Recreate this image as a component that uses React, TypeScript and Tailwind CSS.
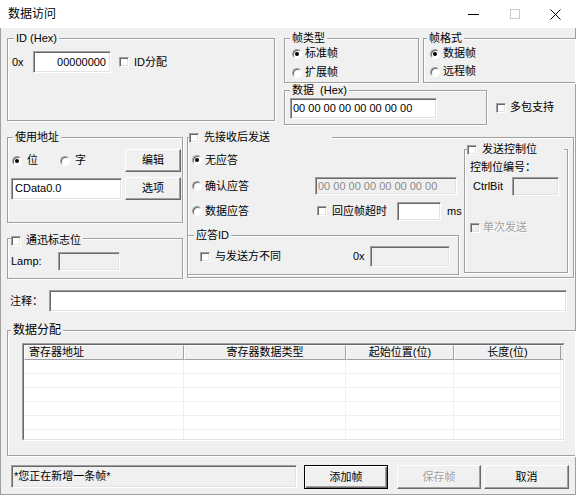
import type { ReactNode } from 'react';

const SUNKEN =
  'border border-t-[#a0a0a0] border-l-[#a0a0a0] border-b-white border-r-white shadow-[inset_1px_1px_0_#696969,inset_-1px_-1px_0_#e3e3e3]';

function Group({
  caption,
  captionClass = '',
  className = '',
  children,
}: {
  caption: ReactNode;
  captionClass?: string;
  className?: string;
  children?: ReactNode;
}) {
  return (
    <div
      className={`relative shrink-0 border border-[#a0a0a0] shadow-[inset_1px_1px_0_#fff,1px_1px_0_#fff] ${className}`}
    >
      <div className={`absolute bg-[#f0f0f0] leading-[13px] ${captionClass}`}>{caption}</div>
      {children}
    </div>
  );
}

function Edit({
  className = '',
  disabled,
  gray,
  children,
}: {
  className?: string;
  disabled?: boolean;
  gray?: boolean;
  children?: ReactNode;
}) {
  return (
    <div
      className={`flex shrink-0 items-center overflow-hidden whitespace-nowrap ${SUNKEN} ${
        disabled ? 'bg-[#f0f0f0]' : 'bg-white'
      } ${gray ? 'text-[#8a8a8a]' : ''} ${className}`}
    >
      {children}
    </div>
  );
}

function Check({ className = '', disabled }: { className?: string; disabled?: boolean }) {
  return (
    <span
      className={`inline-block shrink-0 w-[10px] h-[10px] ${SUNKEN} ${
        disabled ? 'bg-[#f0f0f0]' : 'bg-white'
      } ${className}`}
    />
  );
}

function Radio({ checked }: { checked?: boolean }) {
  return (
    <span className="inline-flex shrink-0 items-center justify-center w-[10px] h-[10px] rounded-full bg-white border border-t-[#a0a0a0] border-l-[#a0a0a0] border-b-white border-r-white shadow-[inset_1px_1px_0_#696969]">
      {checked && <span className="w-[4px] h-[4px] rounded-full bg-black" />}
    </span>
  );
}

function RadioLabel({ checked, children }: { checked?: boolean; children: ReactNode }) {
  return (
    <div className="flex items-center h-[13px]">
      <Radio checked={checked} />
      <span className="ml-[3px]">{children}</span>
    </div>
  );
}

function Btn({
  className = '',
  isDefault,
  disabled,
  children,
}: {
  className?: string;
  isDefault?: boolean;
  disabled?: boolean;
  children: ReactNode;
}) {
  const frame = isDefault
    ? 'border border-black shadow-[inset_1px_1px_0_#fff,inset_-1px_-1px_0_#696969,inset_-2px_-2px_0_#a0a0a0]'
    : 'border border-t-white border-l-white border-b-[#696969] border-r-[#696969] shadow-[inset_-1px_-1px_0_#a0a0a0]';
  return (
    <div
      className={`flex shrink-0 items-center justify-center bg-[#f0f0f0] ${frame} ${
        disabled ? 'text-[#a0a0a0] [text-shadow:1px_1px_0_#fff]' : ''
      } ${className}`}
    >
      {children}
    </div>
  );
}

function CheckCaption({ label }: { label: string }) {
  return (
    <div className="flex items-center h-[13px]">
      <Check />
      <span className="ml-[5px]">{label}</span>
    </div>
  );
}

const HEADERS = [
  { label: '寄存器地址', w: 'w-[160px]', align: 'justify-start pl-[4px]' },
  { label: '寄存器数据类型', w: 'w-[162px]', align: 'justify-center' },
  { label: '起始位置(位)', w: 'w-[108px]', align: 'justify-center' },
  { label: '长度(位)', w: 'w-[107px]', align: 'justify-center' },
];

export default function App() {
  return (
    <div className="w-[576px] h-[495px] overflow-hidden bg-[#f0f0f0] font-['Liberation_Sans','Noto_Sans_CJK_SC',sans-serif] text-[11px] leading-[13px] text-black">
      {/* Title bar */}
      <div className="h-[28px] bg-white flex items-center">
        <span className="ml-[8px] text-[12px]">数据访问</span>
        <div className="ml-auto flex h-full">
          <div className="w-[41px] flex items-center justify-center">
            <svg width="11" height="11" viewBox="0 0 11 11">
              <path d="M0 5.5H11" stroke="#000" strokeWidth="1" />
            </svg>
          </div>
          <div className="w-[41px] flex items-center justify-center">
            <svg width="10" height="10" viewBox="0 0 10 10">
              <rect x="0.5" y="0.5" width="9" height="9" fill="none" stroke="#cccccc" />
            </svg>
          </div>
          <div className="w-[41px] flex items-center justify-center">
            <svg width="11" height="11" viewBox="0 0 11 11">
              <path d="M0.5 0.5L10.5 10.5M10.5 0.5L0.5 10.5" stroke="#000" strokeWidth="1" />
            </svg>
          </div>
        </div>
      </div>

      {/* Body */}
      <div className="h-[467px] border-x border-b border-[#a0a0a0] flex flex-col">
        {/* Row A */}
        <div className="mt-[10px] flex items-start">
          <Group
            className="ml-[6px] w-[268px] h-[83px]"
            caption="ID (Hex)"
            captionClass="-top-[7px] left-[6px] px-[2px]"
          >
            <div className="mt-[12px] ml-[4px] flex items-center">
              <span className="w-[21px]">0x</span>
              <Edit className="w-[78px] h-[22px] justify-end pr-[4px]">00000000</Edit>
              <Check className="ml-[8px]" />
              <span className="ml-[5px]">ID分配</span>
            </div>
          </Group>

          <div className="ml-[9px] flex flex-col">
            <div className="flex">
              <Group
                className="w-[135px] h-[45px]"
                caption="帧类型"
                captionClass="-top-[7px] left-[5px] px-[2px]"
              >
                <div className="mt-[8px] ml-[7px] flex flex-col gap-[6px]">
                  <RadioLabel checked>标准帧</RadioLabel>
                  <RadioLabel>扩展帧</RadioLabel>
                </div>
              </Group>
              <Group
                className="ml-[4px] w-[152px] h-[45px] border-r-0"
                caption="帧格式"
                captionClass="-top-[7px] left-[3px] px-[2px]"
              >
                <div className="mt-[8px] ml-[6px] flex flex-col gap-[5px]">
                  <RadioLabel checked>数据帧</RadioLabel>
                  <RadioLabel>远程帧</RadioLabel>
                </div>
              </Group>
            </div>
            <div className="mt-[7px] flex items-center">
              <Group
                className="w-[203px] h-[35px]"
                caption={'数据\u00a0\u00a0(Hex)'}
                captionClass="-top-[7px] left-[5px] px-[2px]"
              >
                <Edit className="mt-[7px] ml-[5px] w-[147px] h-[21px] pl-[2px]">
                  00 00 00 00 00 00 00 00
                </Edit>
              </Group>
              <Check className="ml-[9px]" />
              <span className="ml-[4px]">多包支持</span>
            </div>
          </div>
        </div>

        {/* Row B */}
        <div className="mt-[12px] flex items-start">
          <div className="ml-[6px] w-[176px] flex flex-col">
            <Group
              className="h-[86px]"
              caption="使用地址"
              captionClass="-top-[7px] left-[5px] px-[2px]"
            >
              <div className="mt-[11px] flex items-center">
                <div className="ml-[4px] w-[113px] flex items-center">
                  <div className="w-[48px] flex items-center">
                    <Radio checked />
                    <span className="ml-[5px]">位</span>
                  </div>
                  <Radio />
                  <span className="ml-[5px]">字</span>
                </div>
                <Btn className="w-[56px] h-[23px]">编辑</Btn>
              </div>
              <div className="mt-[5px] flex items-center">
                <Edit className="ml-[3px] w-[111px] h-[22px] pl-[3px]">CData0.0</Edit>
                <Btn className="ml-[3px] w-[56px] h-[23px]">选项</Btn>
              </div>
            </Group>
            <Group
              className="mt-[15px] h-[41px]"
              caption={<CheckCaption label="通迅标志位" />}
              captionClass="-top-[5px] left-[3px] pr-[2px]"
            >
              <div className="mt-[13px] ml-[3px] flex items-center">
                <span className="w-[47px]">Lamp:</span>
                <Edit disabled className="w-[62px] h-[19px]" />
              </div>
            </Group>
          </div>

          <Group
            className="ml-[4px] w-[387px] h-[141px]"
            caption={<CheckCaption label="先接收后发送" />}
            captionClass="-top-[7px] left-[1px] w-[143px]"
          >
            <div className="flex">
              <div className="w-[276px] flex flex-col">
                <div className="mt-[12px] ml-[4px] h-[20px] flex items-center">
                  <Radio checked />
                  <span className="ml-[3px]">无应答</span>
                </div>
                <div className="mt-[6px] ml-[4px] h-[20px] flex items-center">
                  <div className="w-[123px] flex items-center">
                    <Radio />
                    <span className="ml-[3px]">确认应答</span>
                  </div>
                  <Edit disabled gray className="w-[142px] h-[18px] pl-[2px]">
                    00 00 00 00 00 00 00 00
                  </Edit>
                </div>
                <div className="mt-[5px] ml-[4px] h-[20px] flex items-center">
                  <div className="w-[125px] flex items-center">
                    <Radio />
                    <span className="ml-[3px]">数据应答</span>
                  </div>
                  <Check />
                  <span className="ml-[5px] w-[65px]">回应帧超时</span>
                  <Edit className="w-[44px] h-[19px]" />
                  <span className="ml-[6px]">ms</span>
                </div>
                <Group
                  className="mt-[14px] -ml-[1px] w-[272px] h-[40px]"
                  caption="应答ID"
                  captionClass="-top-[7px] left-[6px] px-[2px]"
                >
                  <div className="mt-[10px] flex items-center">
                    <Check className="ml-[12px]" />
                    <span className="ml-[5px] w-[138px]">与发送方不同</span>
                    <span className="w-[17px]">0x</span>
                    <Edit disabled className="w-[80px] h-[21px]" />
                  </div>
                </Group>
              </div>

              <Group
                className="mt-[11px] w-[104px] h-[124px]"
                caption={<CheckCaption label="发送控制位" />}
                captionClass="-top-[7px] left-[2px] w-[97px]"
              >
                <div className="mt-[11px] ml-[5px]">控制位编号：</div>
                <div className="mt-[3px] flex items-center">
                  <span className="ml-[8px] w-[39px]">CtrlBit</span>
                  <Edit disabled className="w-[47px] h-[19px]" />
                </div>
                <div className="mt-[25px] ml-[5px] flex items-center text-[#a0a0a0] [text-shadow:1px_1px_0_#fff]">
                  <Check disabled />
                  <span className="ml-[3px]">单次发送</span>
                </div>
              </Group>
            </div>
          </Group>
        </div>

        {/* Row C: 注释 */}
        <div className="mt-[11px] h-[22px] flex items-center">
          <span className="ml-[9px] w-[39px]">注释：</span>
          <Edit className="w-[518px] h-[22px]" />
        </div>

        {/* Row D: 数据分配 */}
        <Group
          className="mt-[18px] ml-[6px] w-[568px] h-[126px] border-r-0"
          caption="数据分配"
          captionClass="-top-[8px] left-[3px] px-[2px] text-[12px] leading-[14px]"
        >
          <div className="mt-[12px] ml-[14px] w-[543px] h-[98px] border border-t-[#a0a0a0] border-l-[#a0a0a0] border-b-white border-r-white">
            <div className="h-full border border-t-[#696969] border-l-[#696969] border-b-[#e3e3e3] border-r-[#e3e3e3] bg-white flex flex-col overflow-hidden">
              <div className="flex h-[15px] shrink-0 bg-[#f0f0f0]">
                {HEADERS.map((h) => (
                  <div
                    key={h.label}
                    className={`${h.w} flex items-center ${h.align} border-l border-t border-l-white border-t-white border-r border-b border-r-[#a0a0a0] border-b-[#a0a0a0]`}
                  >
                    {h.label}
                  </div>
                ))}
                <div className="flex-1 border-t border-t-white border-b border-b-[#a0a0a0]" />
              </div>
              {[0, 1, 2, 3, 4, 5].map((r) => (
                <div key={r} className="flex h-[14px] shrink-0 border-b border-[#f0f0f0]">
                  {HEADERS.map((h) => (
                    <div key={h.label} className={`${h.w} border-r border-[#f0f0f0]`} />
                  ))}
                </div>
              ))}
            </div>
          </div>
        </Group>

        {/* Row E: status and buttons */}
        <div className="mt-[9px] flex items-start">
          <Edit disabled className="ml-[10px] w-[286px] h-[23px] pl-[2px]">
            *您正在新增一条帧*
          </Edit>
          <Btn isDefault className="ml-[7px] w-[84px] h-[24px]">
            添加帧
          </Btn>
          <Btn disabled className="ml-[9px] w-[84px] h-[24px]">
            保存帧
          </Btn>
          <Btn className="ml-[3px] w-[85px] h-[24px]">取消</Btn>
        </div>
      </div>
    </div>
  );
}
